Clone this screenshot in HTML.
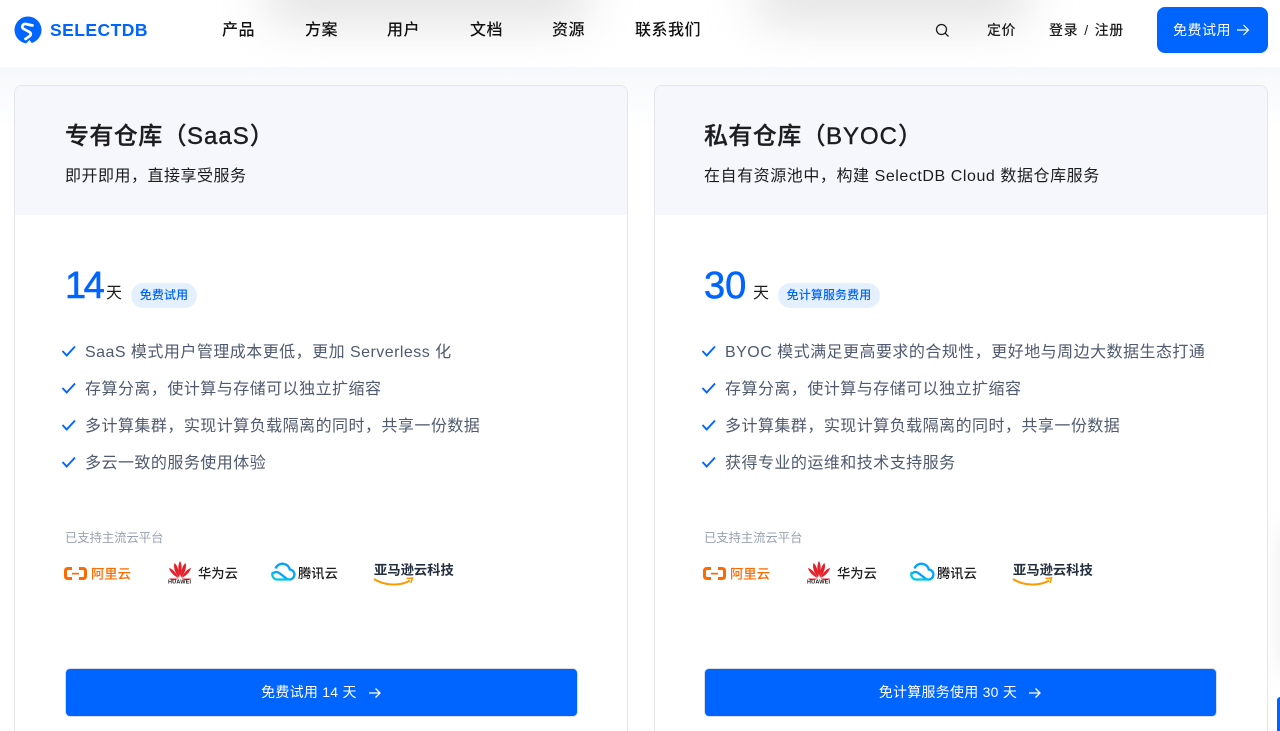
<!DOCTYPE html>
<html lang="zh-CN">
<head>
<meta charset="utf-8">
<title>SelectDB</title>
<style>
*{box-sizing:border-box;margin:0;padding:0}
html,body{width:1280px;height:731px;overflow:hidden;background:#fff}
body{position:relative;font-family:"Liberation Sans","Noto Sans CJK SC",sans-serif;color:#1d1d1f}
.a{position:absolute;white-space:nowrap}
.pagebg{position:absolute;left:0;top:67px;width:1280px;height:60px;background:linear-gradient(#f6f8fb,#fff)}
.nav{position:absolute;left:0;top:0;width:1280px;height:67px;background:#fff;overflow:hidden}
.blur{position:absolute;background:#c4c4c4;filter:blur(24px);border-radius:20px}
.menu{font-size:16px;line-height:20px;top:21px;color:#111;font-weight:500;letter-spacing:.5px}
.card{position:absolute;top:85px;width:614px;height:660px;background:#fff;border:1px solid #e4e6eb;border-radius:8px;overflow:hidden}
.head{position:absolute;left:0;top:0;width:100%;height:129px;background:#f6f7fc}
.title{left:50px;top:35px;font-size:24px;line-height:32px;font-weight:500;color:#1d1d1f;letter-spacing:.4px;-webkit-text-stroke:.25px #1d1d1f}
.title b{font-weight:400;letter-spacing:1px;-webkit-text-stroke:.4px #1d1d1f}
.sub{left:50px;top:79px;font-size:16px;line-height:24px;color:#1d1d1f;letter-spacing:.5px}
.num{left:49px;top:176px;font-size:38px;line-height:48px;color:#0065ff;-webkit-text-stroke:.6px #0065ff}
.day{top:197px;font-size:16px;line-height:22px;color:#1d1d1f}
.tag{top:197px;height:25px;border-radius:13px;background:#e5f0ff;color:#0065ff;font-size:12px;font-weight:500;line-height:25px;text-align:center;letter-spacing:.1px}
.li{left:70px;font-size:16px;line-height:24px;color:#4f5a70;letter-spacing:.47px}
.chk{position:absolute;left:46px;width:16px;height:16px}
.chk path{fill:none;stroke:#0065ff;stroke-width:1.900}
.lab{left:50px;top:443px;font-size:12.300px;line-height:18px;color:#98a1b3}
.btn{position:absolute;left:50px;top:582px;width:513px;height:49px;background:#0065ff;border-radius:5px;border:1px solid #d9dde3;color:#fff;font-size:14px;line-height:47px;text-align:center;letter-spacing:.25px}
.btn svg{vertical-align:-2px;margin-left:7px}
.logo{position:absolute;left:49px;top:472px;width:400px;height:34px}
.logo text{font-family:"Liberation Sans","Noto Sans CJK SC",sans-serif}
</style>
</head>
<body>
<div class="pagebg"></div>
<div style="position:absolute;left:1280px;top:530px;width:30px;height:140px;background:#eee;filter:blur(12px)"></div>

<div class="card" style="left:14px">
  <div class="head"></div>
  <div class="a title">专有仓库（<b>SaaS</b>）</div>
  <div class="a sub">即开即用，直接享受服务</div>
  <div class="a num" style="left:50px;letter-spacing:-2.500px">14</div>
  <div class="a day" style="left:91px">天</div>
  <div class="a tag" style="left:116px;width:66px">免费试用</div>
  <svg class="chk" style="top:257px" viewBox="0 0 16 16"><path d="M1.500 8l4.200 4.500 8.300-9"/></svg>
  <div class="a li" style="top:255px">SaaS 模式用户管理成本更低，更加 Serverless 化</div>
  <svg class="chk" style="top:294px" viewBox="0 0 16 16"><path d="M1.500 8l4.200 4.500 8.300-9"/></svg>
  <div class="a li" style="top:292px">存算分离，使计算与存储可以独立扩缩容</div>
  <svg class="chk" style="top:331px" viewBox="0 0 16 16"><path d="M1.500 8l4.200 4.500 8.300-9"/></svg>
  <div class="a li" style="top:329px">多计算集群，实现计算负载隔离的同时，共享一份数据</div>
  <svg class="chk" style="top:368px" viewBox="0 0 16 16"><path d="M1.500 8l4.200 4.500 8.300-9"/></svg>
  <div class="a li" style="top:366px">多云一致的服务使用体验</div>
  <div class="a lab">已支持主流云平台</div>
  <svg class="logo" viewBox="0 0 400 34">
    <path d="M8 10.500H4Q1.500 10.500 1.500 13v5q0 2.500 2.500 2.500H8M15 10.500h4q2.500 0 2.500 2.500v5q0 2.500-2.500 2.500H15" fill="none" stroke="#ff6a00" stroke-width="3"/>
    <rect x="8" y="14.800" width="7" height="1.700" fill="#ff6a00"/>
    <text x="27" y="20.500" font-size="13.300" font-weight="500" fill="#ff6a00">阿里云</text>
    <g fill="#e6202b"><path d="M114.500 20C110 18 106 14 105 10c4 1 8 6 9.500 10z"/><path d="M115 19.500C111 15 109 9 110.500 5c3 2 5 9 4.500 14.500z"/><path d="M116 19c-2-5-2.500-12 0-16 2.500 4 2 11 0 16z"/><path d="M117 19.500c-.5-5.500 1.500-12.500 4.500-14.500 1.500 4-.5 10-4.500 14.500z"/><path d="M117.500 20c1.500-4 5.500-9 9.500-10-1 4-5 8-9.500 10z"/><path d="M114.500 20.500H105c1.500 2 6 2.500 9.500 0zM117.500 20.500h9.500c-1.500 2-6 2.500-9.500 0z"/></g>
    <text x="104" y="25.500" font-size="5.500" font-weight="700" fill="#222" textLength="23">HUAWEI</text>
    <text x="134" y="20" font-size="13.300" font-weight="500" fill="#1d1d1f">华为云</text>
    <path d="M209 15.500a5 5 0 0 1 5.500-1l6 4.500c1.500 1.500 3 2.500 4.500 2.500a5 5 0 0 0 .8-10 7.500 7.500 0 0 0-14.300-1" fill="none" stroke="#00a3ff" stroke-width="2.300"/>
    <path d="M226 21.500h-13a5 5 0 0 1-4-7.500" fill="none" stroke="#00c8e0" stroke-width="2.300"/>
    <text x="234" y="20" font-size="13.300" font-weight="500" fill="#1d1d1f">腾讯云</text>
    <text x="310" y="16.500" font-size="13.300" font-weight="700" fill="#232f3e">亚马逊云科技</text>
    <path d="M310 21c10 6.500 26 7.500 36 1.500" fill="none" stroke="#f90" stroke-width="2"/><path d="M342.500 20.500l6-.500-1.500 5" fill="none" stroke="#f90" stroke-width="1.500"/>
  </svg>
  <div class="btn">免费试用 14 天 <svg width="14" height="12" viewBox="0 0 14 12"><path d="M1 6h11M7.500 1.500L12 6l-4.500 4.500" fill="none" stroke="#fff" stroke-width="1.300"/></svg></div>
</div>

<div class="card" style="left:654px">
  <div class="head"></div>
  <div class="a title" style="left:49px">私有仓库（<b>BYOC</b>）</div>
  <div class="a sub" style="left:49px;letter-spacing:.56px">在自有资源池中，构建 SelectDB Cloud 数据仓库服务</div>
  <div class="a num">30</div>
  <div class="a day" style="left:98px">天</div>
  <div class="a tag" style="left:123px;width:102px">免计算服务费用</div>
  <svg class="chk" style="top:257px" viewBox="0 0 16 16"><path d="M1.500 8l4.200 4.500 8.300-9"/></svg>
  <div class="a li" style="top:255px">BYOC 模式满足更高要求的合规性，更好地与周边大数据生态打通</div>
  <svg class="chk" style="top:294px" viewBox="0 0 16 16"><path d="M1.500 8l4.200 4.500 8.300-9"/></svg>
  <div class="a li" style="top:292px">存算分离，使计算与存储可以独立扩缩容</div>
  <svg class="chk" style="top:331px" viewBox="0 0 16 16"><path d="M1.500 8l4.200 4.500 8.300-9"/></svg>
  <div class="a li" style="top:329px">多计算集群，实现计算负载隔离的同时，共享一份数据</div>
  <svg class="chk" style="top:368px" viewBox="0 0 16 16"><path d="M1.500 8l4.200 4.500 8.300-9"/></svg>
  <div class="a li" style="top:366px">获得专业的运维和技术支持服务</div>
  <div class="a lab" style="left:49px">已支持主流云平台</div>
  <svg class="logo" style="left:48px" viewBox="0 0 400 34">
    <path d="M8 10.500H4Q1.500 10.500 1.500 13v5q0 2.500 2.500 2.500H8M15 10.500h4q2.500 0 2.500 2.500v5q0 2.500-2.500 2.500H15" fill="none" stroke="#ff6a00" stroke-width="3"/>
    <rect x="8" y="14.800" width="7" height="1.700" fill="#ff6a00"/>
    <text x="27" y="20.500" font-size="13.300" font-weight="500" fill="#ff6a00">阿里云</text>
    <g fill="#e6202b"><path d="M114.500 20C110 18 106 14 105 10c4 1 8 6 9.500 10z"/><path d="M115 19.500C111 15 109 9 110.500 5c3 2 5 9 4.500 14.500z"/><path d="M116 19c-2-5-2.500-12 0-16 2.500 4 2 11 0 16z"/><path d="M117 19.500c-.5-5.500 1.500-12.500 4.500-14.500 1.500 4-.5 10-4.500 14.500z"/><path d="M117.500 20c1.500-4 5.500-9 9.500-10-1 4-5 8-9.500 10z"/><path d="M114.500 20.500H105c1.500 2 6 2.500 9.500 0zM117.500 20.500h9.500c-1.500 2-6 2.500-9.500 0z"/></g>
    <text x="104" y="25.500" font-size="5.500" font-weight="700" fill="#222" textLength="23">HUAWEI</text>
    <text x="134" y="20" font-size="13.300" font-weight="500" fill="#1d1d1f">华为云</text>
    <path d="M209 15.500a5 5 0 0 1 5.500-1l6 4.500c1.500 1.500 3 2.500 4.500 2.500a5 5 0 0 0 .8-10 7.500 7.500 0 0 0-14.300-1" fill="none" stroke="#00a3ff" stroke-width="2.300"/>
    <path d="M226 21.500h-13a5 5 0 0 1-4-7.500" fill="none" stroke="#00c8e0" stroke-width="2.300"/>
    <text x="234" y="20" font-size="13.300" font-weight="500" fill="#1d1d1f">腾讯云</text>
    <text x="310" y="16.500" font-size="13.300" font-weight="700" fill="#232f3e">亚马逊云科技</text>
    <path d="M310 21c10 6.500 26 7.500 36 1.500" fill="none" stroke="#f90" stroke-width="2"/><path d="M342.500 20.500l6-.500-1.500 5" fill="none" stroke="#f90" stroke-width="1.500"/>
  </svg>
  <div class="btn" style="left:49px">免计算服务使用 30 天 <svg width="14" height="12" viewBox="0 0 14 12"><path d="M1 6h11M7.500 1.500L12 6l-4.500 4.500" fill="none" stroke="#fff" stroke-width="1.300"/></svg></div>
</div>

<div style="position:absolute;left:1277px;top:697px;width:3px;height:34px;background:#0065ff;border-radius:4px 0 0 0"></div>

<div class="nav">
  <div class="blur" style="left:265px;top:-30px;width:325px;height:52px;opacity:.5"></div>
  <div class="blur" style="left:755px;top:-30px;width:275px;height:52px;opacity:.5"></div>
  <svg style="position:absolute;left:14px;top:16px" width="28" height="28" viewBox="0 0 28 28">
    <circle cx="14" cy="14" r="13.500" fill="#0065ff"/>
    <path d="M11.500 28L15.500 24 18 27.500z" fill="#fff"/>
    <path d="M18.500 9.500L11.800 8C8.800 7.500 7 10.800 9.500 12.800L15.500 16C17.500 17.500 17 19.500 15 20.500L11.500 23" fill="none" stroke="#fff" stroke-width="2.700" stroke-linecap="round"/>
  </svg>
  <div class="a" style="left:50px;top:19px;font-size:17.500px;line-height:22px;font-weight:700;color:#0065ff;letter-spacing:.45px">SELECTDB</div>
  <div class="a menu" style="left:222px">产品</div>
  <div class="a menu" style="left:305px">方案</div>
  <div class="a menu" style="left:387px">用户</div>
  <div class="a menu" style="left:470px">文档</div>
  <div class="a menu" style="left:552px">资源</div>
  <div class="a menu" style="left:635px">联系我们</div>
  <svg style="position:absolute;left:935px;top:23px" width="15" height="15" viewBox="0 0 15 15"><circle cx="6.500" cy="6.500" r="5" fill="none" stroke="#1d1d1f" stroke-width="1.300"/><path d="M10.200 10.200l3.300 3.300" stroke="#1d1d1f" stroke-width="1.300"/></svg>
  <div class="a" style="left:987px;top:20px;font-size:14px;line-height:20px;font-weight:500;color:#1d1d1f;letter-spacing:.5px">定价</div>
  <div class="a" style="left:1049px;top:20px;font-size:14px;line-height:20px;font-weight:500;color:#1d1d1f;letter-spacing:.6px;word-spacing:1.500px">登录 / 注册</div>
  <div class="a" style="left:1157px;top:7px;width:111px;height:46px;background:#0065ff;border-radius:8px;color:#fff;font-size:14px;line-height:46px;padding-left:16px;letter-spacing:.5px">免费试用 <svg style="vertical-align:-1px;margin-left:1px" width="14" height="12" viewBox="0 0 14 12"><path d="M1 6h11.500M7.500 1L12.500 6l-5 5" fill="none" stroke="#fff" stroke-width="1.200"/></svg></div>
</div>
</body>
</html>
